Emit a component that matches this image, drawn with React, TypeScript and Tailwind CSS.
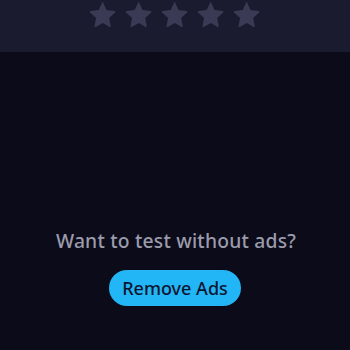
import React from "react";

function Star() {
  return (
    <svg width="32" height="32" viewBox="0 0 24 24" className="block">
      <path
        d="M12 2.6l2.65 5.6 6.1.75c.55.07.77.75.36 1.13l-4.5 4.2 1.16 6.05c.1.54-.47.96-.96.7L12 18.05l-5.41 2.98c-.49.26-1.06-.16-.96-.7l1.16-6.05-4.5-4.2c-.41-.38-.19-1.06.36-1.13l6.1-.75L11.4 2.6c.24-.5.96-.5 1.2 0z"
        fill="#3a3a55"
      />
    </svg>
  );
}

export default function App() {
  return (
    <div
      className="w-[350px] h-[350px] flex flex-col bg-[#0b0b19] overflow-hidden"
      style={{ fontFamily: '"Noto Sans", "DejaVu Sans", sans-serif' }}
    >
      <div className="h-[53px] bg-[#1b1b2f] flex justify-center items-start gap-[4px] -mt-[1px]">
        <Star />
        <Star />
        <Star />
        <Star />
        <Star />
      </div>
      <div className="flex-1 flex flex-col items-center pt-[177px]">
        <div className="text-[19.3px] leading-[24px] font-medium text-[#9b9bac] tracking-[0.2px] pl-[2px]">
          Want to test without ads?
        </div>
        <button className="mt-[17px] w-[132px] h-[36px] rounded-full bg-[#22b6f6] text-[#0b1530] text-[18px] font-medium flex items-center justify-center">
          Remove Ads
        </button>
      </div>
    </div>
  );
}
